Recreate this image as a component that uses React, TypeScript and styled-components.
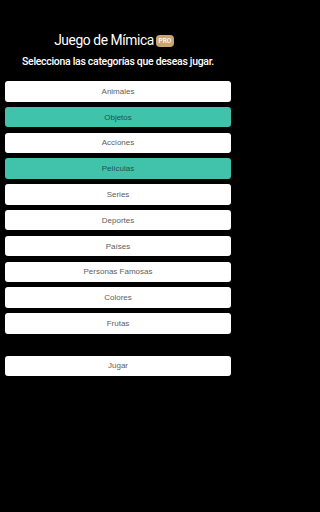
import styled, { createGlobalStyle } from "styled-components";

const GlobalStyle = createGlobalStyle`
  html, body {
    margin: 0;
    padding: 0;
    background-color: #000;
  }
  #root {
    min-height: 512px;
  }
`;

const Screen = styled.div`
  width: 236px;
  min-height: 512px;
  display: flex;
  flex-direction: column;
  padding: 30px 5px 0 5px;
  box-sizing: border-box;
  background-color: #000;
  font-family: Roboto, Inter, "Liberation Sans", sans-serif;
`;

const TitleRow = styled.div`
  display: flex;
  align-items: center;
  justify-content: center;
  gap: 2px;
  height: 20px;
  padding-right: 8px;
`;

const Title = styled.h1`
  margin: 0;
  font-size: 13.8px;
  font-weight: 400;
  letter-spacing: -0.4px;
  color: #fff;
`;

const Badge = styled.span`
  display: inline-flex;
  align-items: center;
  justify-content: center;
  width: 18px;
  height: 12px;
  border-radius: 4px;
  background-color: #c9a571;
  color: #fff;
  font-size: 6.5px;
  font-weight: 500;
  margin-top: 1px;
`;

const Subtitle = styled.p`
  margin: 5px 0 13px 0;
  text-align: center;
  font-size: 10.5px;
  font-weight: 500;
  letter-spacing: -0.3px;
  color: #fff;
`;

const List = styled.div`
  display: flex;
  flex-direction: column;
  gap: 5.3px;
`;

const Option = styled.button<{ selected?: boolean }>`
  height: 20.5px;
  width: 100%;
  display: flex;
  align-items: center;
  justify-content: center;
  border: none;
  border-radius: 3px;
  padding: 0;
  font-family: "Liberation Sans", Arial, sans-serif;
  font-size: 8px;
  cursor: pointer;
  color: ${({ selected }) => (selected ? "#1d554b" : "#5e5e5e")};
  background-color: ${({ selected }) => (selected ? "#41c3ab" : "#fff")};
`;

const PlayArea = styled.div`
  margin-top: 22px;
`;

const categories = [
  { name: "Animales", selected: false },
  { name: "Objetos", selected: true },
  { name: "Acciones", selected: false },
  { name: "Películas", selected: true },
  { name: "Series", selected: false },
  { name: "Deportes", selected: false },
  { name: "Países", selected: false },
  { name: "Personas Famosas", selected: false },
  { name: "Colores", selected: false },
  { name: "Frutas", selected: false },
];

const App = () => {
  return (
    <>
      <GlobalStyle />
      <Screen>
        <TitleRow>
          <Title>Juego de Mímica</Title>
          <Badge>PRO</Badge>
        </TitleRow>
        <Subtitle>Selecciona las categorías que deseas jugar.</Subtitle>
        <List>
          {categories.map((c) => (
            <Option key={c.name} selected={c.selected}>
              {c.name}
            </Option>
          ))}
        </List>
        <PlayArea>
          <Option>Jugar</Option>
        </PlayArea>
      </Screen>
    </>
  );
};

export default App;
